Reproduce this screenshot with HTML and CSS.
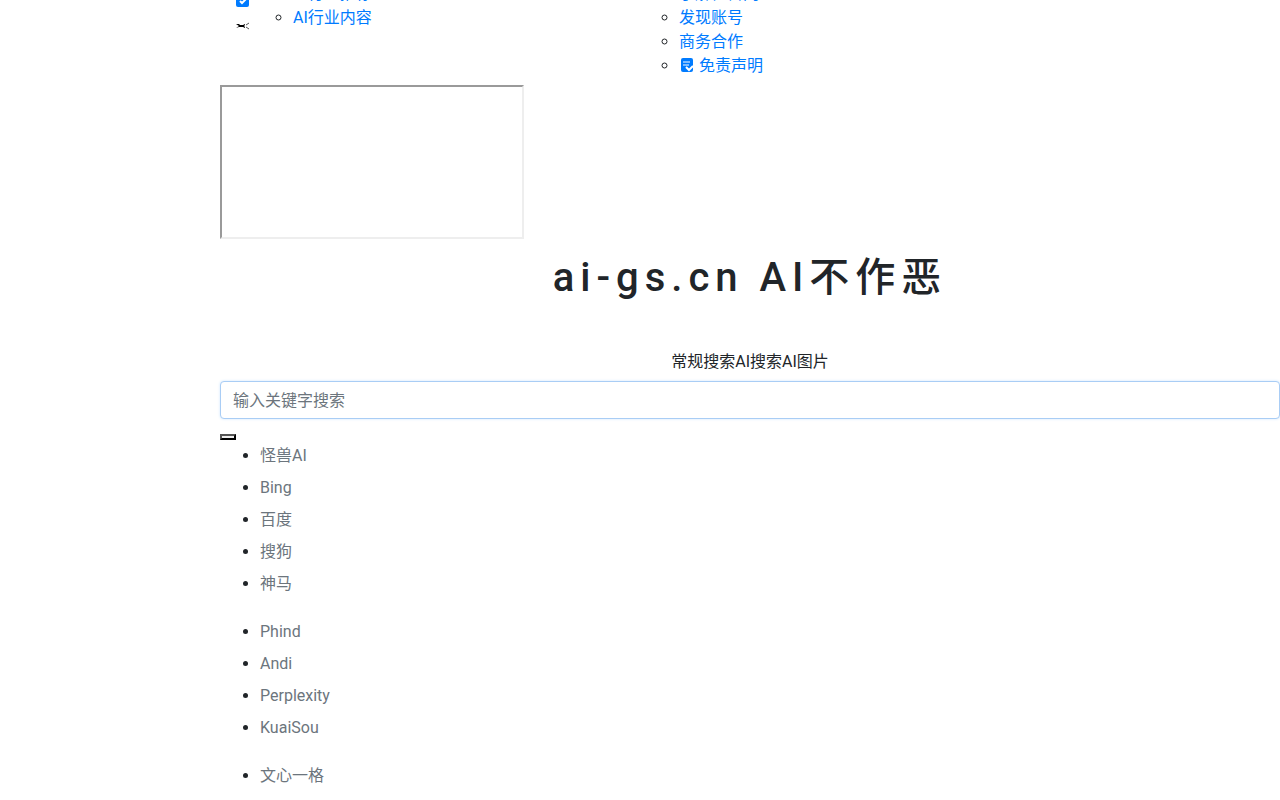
FILE: index.html
```
<!DOCTYPE html>
<html lang="zh-CN">

<head>
    <meta charset="UTF-8">
    <meta name="viewport" content="width=device-width, initial-scale=1.0">
    <title>ai-gs.cn AI不作恶</title>
    <link rel="stylesheet" href="styles.css">
</head>

<body>
    <div class="main-content">
        <nav class="top-nav">
            <div class="nav-icons">
                <svg class="nav-icon" viewBox="0 0 14 14" aria-hidden="true">
                    <rect x="0" width="13" height="14" rx="2" fill="#007bff" />
                    <path d="M4 8l2 2 5-5" fill="none" stroke="#fff" stroke-width="2" />
                </svg>
                <svg class="nav-icon" viewBox="0 0 14 14" aria-hidden="true">
                    <path d="M0 5h3l1 1h3l2-1v1L8 7l1 1v1L7 8H3L0 9l3-2z" fill="#000" />
                    <path d="M13 4l-3 2M10 8l3 2" fill="none" stroke="#555" />
                </svg>
            </div>
            <ul class="sub-menu">
                <li><a href="#">AI行业推荐</a></li>
                <li><a href="#">AI行业内容</a></li>
            </ul>
            <ul class="sub-menu about-menu">
                <li><a href="#">了解怪兽网</a></li>
                <li><a href="#">发现账号</a></li>
                <li><a href="#">商务合作</a></li>
                <li>
                    <a href="#"><svg class="link-icon" viewBox="0 0 16 16" aria-hidden="true">
                            <rect x="2" y="1" width="12" height="14" rx="2" fill="#007bff" />
                            <path d="M4 5h7M4 8h6" fill="none" stroke="#fff" />
                            <path d="M7 10l3 3 4-4" fill="none" stroke="#fff" stroke-width="2" />
                        </svg> 免责声明</a>
                </li>
            </ul>
        </nav>

        <iframe class="weather" title="天气"></iframe>

        <h1>ai-gs.cn AI不作恶</h1>

        <form class="search">
            <div class="search-type"><span>常规搜索</span><span>AI搜索</span><span>AI图片</span></div>
            <input type="text" class="search-input" placeholder="输入关键字搜索" aria-label="输入关键字搜索">
            <button type="submit" class="search-btn" aria-label="搜索"></button>
        </form>

        <ul class="engine-list">
            <li>怪兽AI</li>
            <li>Bing</li>
            <li>百度</li>
            <li>搜狗</li>
            <li>神马</li>
        </ul>
        <ul class="engine-list">
            <li>Phind</li>
            <li>Andi</li>
            <li>Perplexity</li>
            <li>KuaiSou</li>
        </ul>
        <ul class="engine-list">
            <li>文心一格</li>
        </ul>
    </div>
</body>

</html>
```
FILE: styles.css
```
* {
    box-sizing: border-box;
}

body {
    margin: 0;
    font-family: Roboto, "Noto Sans CJK SC", sans-serif;
    font-size: 16px;
    line-height: 24px;
    color: #212529;
    background-color: #fff;
    overflow: hidden;
}

.main-content {
    margin-left: 220px;
}

/* the first row is scrolled past the top edge */
.top-nav {
    display: flex;
    align-items: flex-start;
    margin-top: -18px;
    margin-bottom: 7px;
}

.nav-icons {
    display: flex;
    flex-direction: column;
    gap: 12px;
    width: 33px;
    padding: 11px 0 0 16px;
}

.nav-icon {
    display: block;
    width: 14px;
    height: 14px;
}

.sub-menu {
    width: 386px;
    margin: 0;
    padding-left: 40px;
    list-style: circle;
}

a {
    color: #007bff;
    text-decoration: none;
}

a:hover {
    text-decoration: underline;
}

.link-icon {
    width: 16px;
    height: 16px;
    vertical-align: -2px;
}

.weather {
    display: block;
    width: 304px;
    height: 154px;
    border: 2px inset #eee;
}

h1 {
    margin: 15px 0 48px;
    font-size: 40px;
    font-weight: 500;
    line-height: 48px;
    letter-spacing: 6px;
    text-align: center;
}

.search-type {
    margin-bottom: 7px;
    text-align: center;
}

.search-input {
    display: block;
    width: 100%;
    height: 38px;
    padding: 6px 12px;
    border: 1px solid #a9cdf5;
    border-radius: 4px;
    font: inherit;
    color: #495057;
    box-shadow: 0 0 3px #cfe6ff;
    outline: none;
}

.search-input::placeholder {
    color: #6c757d;
}

.search-btn {
    display: block;
    width: 16px;
    height: 6px;
    margin: 15px 0 4px;
    padding: 0;
    border: 2px outset #000;
    background-color: #efefef;
}

.engine-list {
    margin: 0 0 16px;
    padding-left: 40px;
}

.engine-list li {
    padding-bottom: 8px;
    color: #6c757d;
}

.engine-list li::marker {
    color: #212529;
}
```
